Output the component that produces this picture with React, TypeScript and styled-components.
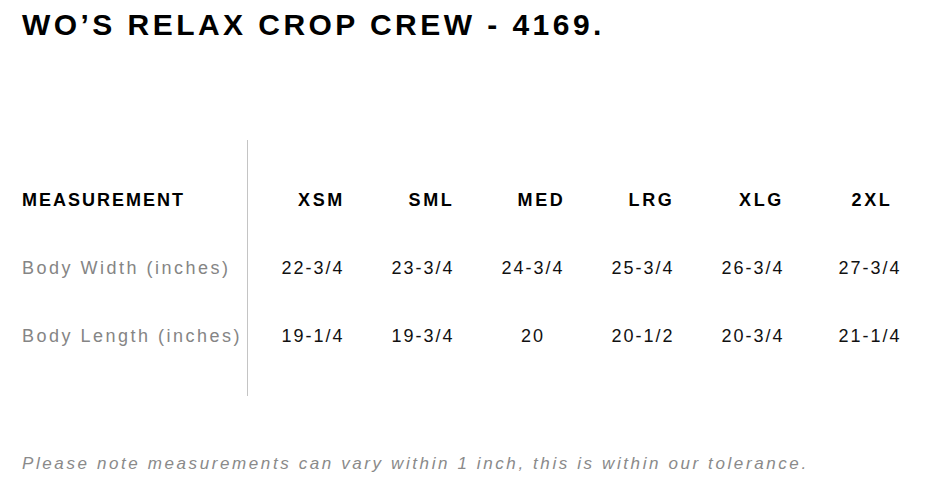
import React from 'react';
import styled, {createGlobalStyle} from 'styled-components';

const GlobalStyle = createGlobalStyle`
  body {
    margin: 0;
    background: #ffffff;
    font-family: "Liberation Sans", Arial, sans-serif;
  }
`

type SizeRow = {
    label: string
    values: string[]
}

const sizes = ['XSM', 'SML', 'MED', 'LRG', 'XLG', '2XL'];

const rows: SizeRow[] = [
    {label: 'Body Width (inches)', values: ['22-3/4', '23-3/4', '24-3/4', '25-3/4', '26-3/4', '27-3/4']},
    {label: 'Body Length (inches)', values: ['19-1/4', '19-3/4', '20', '20-1/2', '20-3/4', '21-1/4']},
];

const App = () => {
    return (
        <>
            <GlobalStyle/>
            <Page>
                <Title>WO’S RELAX CROP CREW - 4169.</Title>
                <Table>
                    <Divider/>
                    <HeaderLabel>MEASUREMENT</HeaderLabel>
                    {sizes.map((s, i) => <SizeHead key={s} $pad={i === sizes.length - 1 ? 4 : 17}>{s}</SizeHead>)}
                    {rows.map(r => (
                        <React.Fragment key={r.label}>
                            <RowLabel>{r.label}</RowLabel>
                            {r.values.map((v, i) => <Value key={i}>{v}</Value>)}
                        </React.Fragment>
                    ))}
                </Table>
                <Note>Please note measurements can vary within 1 inch, this is within our tolerance.</Note>
            </Page>
        </>
    );
};

export default App;

const Page = styled.div`
  width: 945px;
  height: 489px;
  padding: 7px 0 0 22px;
  box-sizing: border-box;
  overflow: hidden;
`

const Title = styled.h1`
  margin: 0;
  font-size: 30px;
  line-height: 36px;
  font-weight: 700;
  letter-spacing: 3.45px;
  color: #000;
  white-space: nowrap;
`

const Table = styled.div`
  display: grid;
  grid-template-columns: 225px 11px repeat(5, 110px) 124px;
  grid-template-rows: repeat(3, 68px);
  padding: 26px 0;
  margin-top: 97px;
  align-items: center;
`

const Divider = styled.div`
  grid-column: 2;
  grid-row: 1 / span 3;
  align-self: stretch;
  justify-self: start;
  width: 1px;
  margin: -26px 0;
  background: #c4c4c4;
`

const Cell = styled.div`
  font-size: 18px;
  white-space: nowrap;
`

const HeaderLabel = styled(Cell)`
  grid-column: 1;
  grid-row: 1;
  font-weight: 700;
  letter-spacing: 2px;
  color: #000;
`

type HeadProps = {
    $pad: number
}

const SizeHead = styled(Cell)<HeadProps>`
  grid-row: 1;
  font-weight: 700;
  letter-spacing: 2.6px;
  color: #000;
  text-align: center;
  padding-left: ${({$pad}) => $pad}px;
`

const RowLabel = styled(Cell)`
  grid-column: 1;
  color: #858585;
  letter-spacing: 2.5px;
`

const Value = styled(Cell)`
  color: #111;
  letter-spacing: 2px;
  text-align: center;

  ${RowLabel} + & {
    grid-column: 3;
  }
`

const Note = styled.p`
  margin: 56px 0 0;
  font-size: 17px;
  line-height: 24px;
  font-style: italic;
  color: #8a8a8a;
  letter-spacing: 2.6px;
  white-space: nowrap;
`
